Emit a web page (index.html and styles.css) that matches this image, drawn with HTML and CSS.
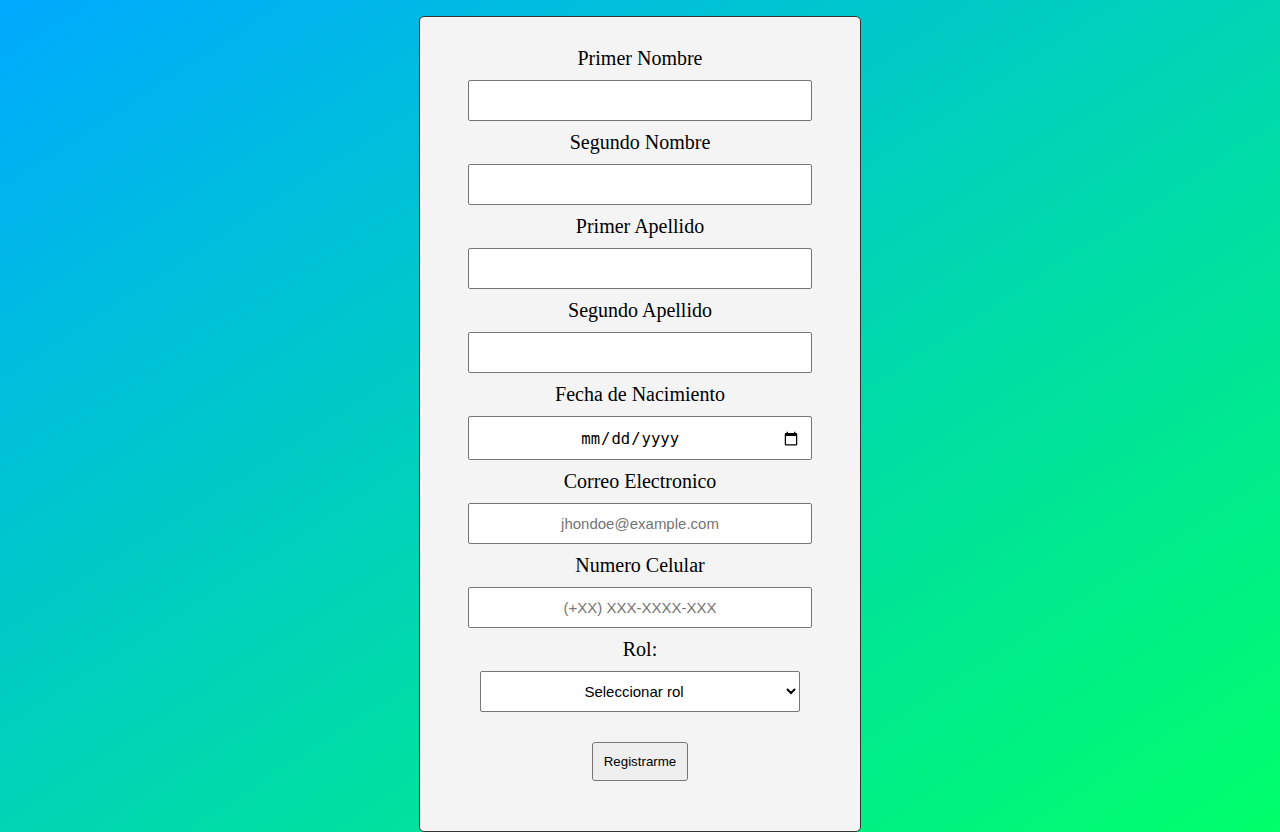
FILE: index.html
```html
<!DOCTYPE html>
<html lang="es">
<head>
<meta charset="utf-8">
<title>Registro</title>
<link rel="stylesheet" href="styles.css">
</head>
<body>
<div class="card">
  <form class="form">
    <label class="label" for="pn">Primer Nombre</label>
    <input class="field" id="pn" type="text">
    <label class="label" for="sn">Segundo Nombre</label>
    <input class="field" id="sn" type="text">
    <label class="label" for="pa">Primer Apellido</label>
    <input class="field" id="pa" type="text">
    <label class="label" for="sa">Segundo Apellido</label>
    <input class="field" id="sa" type="text">
    <label class="label" for="fn">Fecha de Nacimiento</label>
    <input class="field date" id="fn" type="date">
    <label class="label" for="ce">Correo Electronico</label>
    <input class="field" id="ce" type="email" placeholder="jhondoe@example.com">
    <label class="label" for="nc">Numero Celular</label>
    <input class="field" id="nc" type="tel" placeholder="(+XX) XXX-XXXX-XXX">
    <label class="label" for="rol">Rol:</label>
    <select class="select" id="rol">
      <option>Seleccionar rol</option>
    </select>
    <button class="button" type="button">Registrarme</button>
  </form>
</div>
</body>
</html>
```
FILE: styles.css
```css
html {
  min-height: 100%;
  background: linear-gradient(to bottom right, #00aaff, #00ff6a);
}
body {
  margin: 0;
  padding-top: 16px;
  min-height: 816px;
  font-family: "Liberation Serif", "Times New Roman", serif;
}
.card {
  width: 440px;
  height: 814px;
  margin: 0 auto;
  background: #f4f4f4;
  border: 1px solid #333;
  border-radius: 5px;
  box-sizing: content-box;
}
.form {
  display: flex;
  flex-direction: column;
  align-items: center;
  gap: 10px;
  padding-top: 30px;
}
.label {
  font-size: 20px;
  line-height: 23px;
  height: 23px;
  color: #000;
}
.field {
  box-sizing: border-box;
  width: 344px;
  height: 41px;
  margin: 0;
  padding: 0 10px;
  border: 1px solid #767676;
  border-radius: 2px;
  background: #fff;
  font-family: "Liberation Sans", Arial, sans-serif;
  font-size: 15px;
  text-align: center;
  color: #000;
}
.field::placeholder {
  color: #757575;
}
.date {
  height: 44px;
  padding-top: 2px;
  font-family: "DejaVu Sans Mono", monospace;
  font-size: 15.6px;
}
.select {
  box-sizing: border-box;
  width: 320px;
  height: 41px;
  margin: 0;
  padding: 0 8px;
  border: 1px solid #767676;
  border-radius: 2px;
  background: #fff;
  font-family: "Liberation Sans", Arial, sans-serif;
  font-size: 15px;
  text-align: center;
  color: #000;
}
.button {
  margin-top: 20px;
  box-sizing: border-box;
  width: 96px;
  height: 39px;
  padding: 0;
  border: 1px solid #767676;
  border-radius: 3px;
  background: #efefef;
  font-family: "Liberation Sans", Arial, sans-serif;
  font-size: 13.33px;
  color: #000;
}
```
